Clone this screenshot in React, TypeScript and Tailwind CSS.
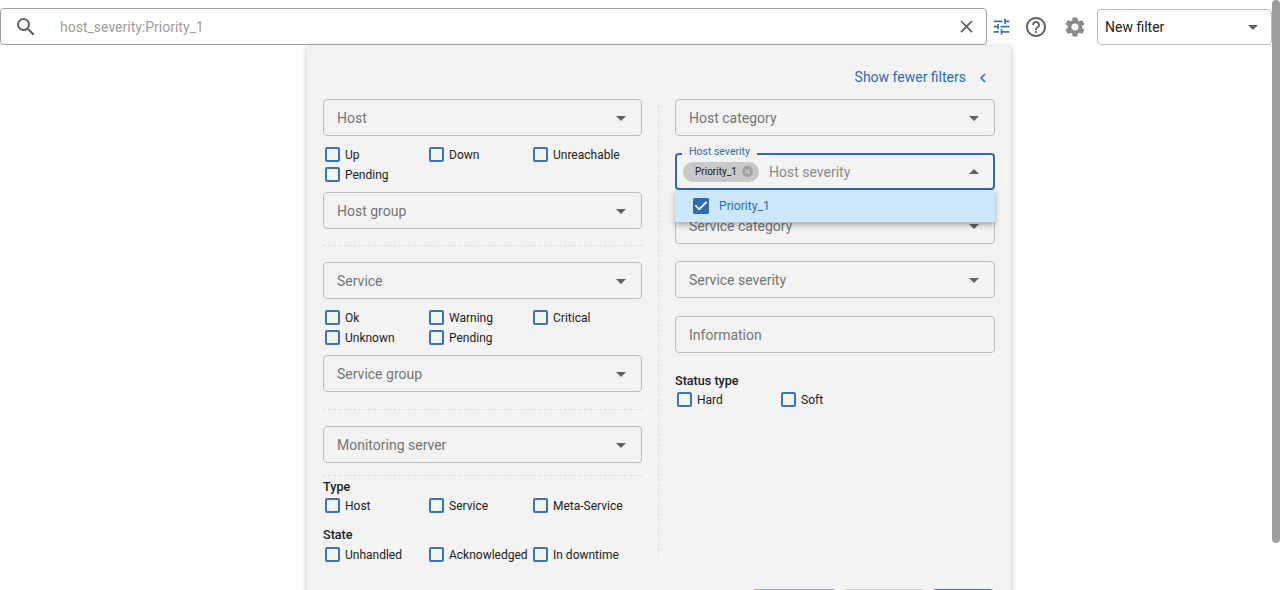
import React from "react";
import {
  MdArrowDropDown,
  MdArrowDropUp,
  MdCancel,
  MdChevronLeft,
  MdClose,
  MdHelpOutline,
  MdSearch,
  MdSettings,
  MdTune,
} from "react-icons/md";

const Field: React.FC<{ label: string; className?: string; arrow?: boolean }> = ({
  label,
  className = "",
  arrow = true,
}) => (
  <div
    className={`flex h-[37px] items-center justify-between rounded border border-[#bdbdbd] pl-[13px] pr-[8px] text-[14px] text-[#757575] ${className}`}
  >
    <span className="mt-[2px]">{label}</span>
    {arrow && <MdArrowDropDown className="text-[24px] text-[#616161]" />}
  </div>
);

const Check: React.FC<{ label: string }> = ({ label }) => (
  <label className="flex h-[20px] items-center text-[12px] text-[#212121]">
    <span className="mb-[2px] ml-[2px] mr-[5px] h-[15px] w-[15px] rounded-[2px] border-2 border-[#3a74b6]" />
    {label}
  </label>
);

const Checks: React.FC<{ labels: string[]; className?: string }> = ({ labels, className = "" }) => (
  <div className={`grid grid-cols-[104px_104px_104px] ${className}`}>
    {labels.map((label, i) => (
      <Check key={i} label={label} />
    ))}
  </div>
);

const Dashed: React.FC<{ className?: string }> = ({ className = "" }) => (
  <div className={`border-t border-dashed border-[#dcdcdc] ${className}`} />
);

const Heading: React.FC<{ label: string; className?: string }> = ({ label, className = "" }) => (
  <div className={`text-[12.6px] font-medium leading-[16px] text-[#212121] ${className}`}>{label}</div>
);

export default function App() {
  return (
    <div className="flex h-[590px] overflow-hidden bg-white font-['Roboto',sans-serif]">
      <div className="w-[1272px] shrink-0">
        <div className="flex h-[46px] items-start pt-[8px]">
          <div className="flex h-[37px] w-[987px] shrink-0 items-center rounded border border-[#9e9e9e] pl-[13px] pr-[9px]">
            <MdSearch className="text-[24px] text-[#616161]" />
            <span className="ml-[22px] mt-[2px] flex-1 text-[14px] text-[#9e9e9e]">host_severity:Priority_1</span>
            <MdClose className="text-[21px] text-[#616161]" />
          </div>
          <div className="flex h-[37px] w-[29px] items-center justify-center">
            <MdTune className="text-[21px] text-[#3a74b6]" />
          </div>
          <div className="flex h-[37px] w-[40px] items-center justify-center">
            <MdHelpOutline className="text-[24px] text-[#616161]" />
          </div>
          <div className="flex h-[37px] w-[38px] items-center justify-center">
            <MdSettings className="text-[24px] text-[#8a8a8a]" />
          </div>
          <div className="ml-[3px] mt-[1px] flex h-[36px] w-[175px] items-center justify-between rounded border border-[#bdbdbd] pl-[7px] pr-[6px] text-[14px] text-[#212121]">
            <span>New filter</span>
            <MdArrowDropDown className="text-[24px] text-[#616161]" />
          </div>
        </div>

        <div className="ml-[307px] h-[600px] w-[704px] bg-[#f3f3f3] px-[16px] shadow-[0_1px_6px_rgba(0,0,0,0.25)]">
          <div className="flex h-[53px] items-start justify-end pt-[23px] pr-[3px]">
            <span className="text-[14px] leading-[16px] text-[#2e6bb0]">Show fewer filters</span>
            <MdChevronLeft className="ml-[8px] text-[18px] text-[#2e6bb0]" />
          </div>

          <div className="flex items-start">
            <div className="w-[319px]">
              <Field label="Host" />
              <Checks labels={["Up", "Down", "Unreachable", "Pending"]} className="mt-[9px]" />
              <Field label="Host group" className="mt-[7px]" />
              <Dashed className="mt-[16px]" />
              <Field label="Service" className="mt-[16px]" />
              <Checks labels={["Ok", "Warning", "Critical", "Unknown", "Pending"]} className="mt-[9px]" />
              <Field label="Service group" className="mt-[7px]" />
              <Dashed className="mt-[17px]" />
              <Field label="Monitoring server" className="mt-[16px]" />
              <Dashed className="mt-[12px]" />
              <Heading label="Type" className="mt-[3px]" />
              <Checks labels={["Host", "Service", "Meta-Service"]} className="mt-[1px]" />
              <Heading label="State" className="mt-[11px]" />
              <Checks labels={["Unhandled", "Acknowledged", "In downtime"]} className="mt-[2px]" />
            </div>

            <div className="mx-[16px] mt-[6px] h-[451px] border-l border-dashed border-[#dcdcdc]" />

            <div className="w-[320px]">
              <Field label="Host category" />
              <div className="relative mt-[17px]">
                <div className="flex h-[37px] items-center justify-between rounded border-2 border-[#2e6bb0] pl-[6px] pr-[7px]">
                  <div className="flex items-center">
                    <span className="flex h-[20px] w-[76px] items-center justify-between rounded-full bg-[#c8c8c8] pl-[12px] pr-[5px] text-[10px] text-[#212121]">
                      Priority_1
                      <MdCancel className="text-[13px] text-[#9e9e9e]" />
                    </span>
                    <span className="ml-[10px] mt-[2px] text-[14px] text-[#8a8a8a]">Host severity</span>
                  </div>
                  <MdArrowDropUp className="text-[24px] text-[#616161]" />
                </div>
                <span className="absolute left-[7px] top-[-8px] bg-[#f3f3f3] px-[7px] text-[10.5px] leading-[14px] text-[#2e6bb0]">
                  Host severity
                </span>
                <div className="absolute left-0 right-0 top-[37px] z-10 flex h-[32px] items-center bg-[#cce6fc] pl-[18px] text-[12.2px] text-[#2e6bb0] shadow-[0_3px_6px_rgba(0,0,0,0.3)]">
                  <svg viewBox="3 3 18 18" className="h-[16px] w-[16px]">
                    <rect x="3" y="3" width="18" height="18" rx="2" fill="#2e6bb0" />
                    <path d="M10 17l-5-5 1.41-1.41L10 14.17l7.59-7.59L19 8l-9 9z" fill="#ffffff" />
                  </svg>
                  <span className="ml-[10px]">Priority_1</span>
                </div>
              </div>
              <Field label="Service category" className="mt-[17px]" />
              <Field label="Service severity" className="mt-[17px]" />
              <Field label="Information" arrow={false} className="mt-[18px]" />
              <Heading label="Status type" className="mt-[20px]" />
              <Checks labels={["Hard", "Soft"]} className="mt-[1px]" />
            </div>
          </div>

          <div className="mt-[24px] flex justify-end gap-[8px] pr-[1px]">
            <div className="h-[36px] w-[84px] rounded bg-[#8fa8cf]" />
            <div className="h-[36px] w-[80px] rounded bg-[#c4c4c4]" />
            <div className="h-[36px] w-[62px] rounded bg-[#2e6bb0]" />
          </div>
        </div>
      </div>

      <div className="w-[8px] shrink-0">
        <div className="h-[543px] rounded-[4px] bg-[#9e9e9e]" />
      </div>
    </div>
  );
}
